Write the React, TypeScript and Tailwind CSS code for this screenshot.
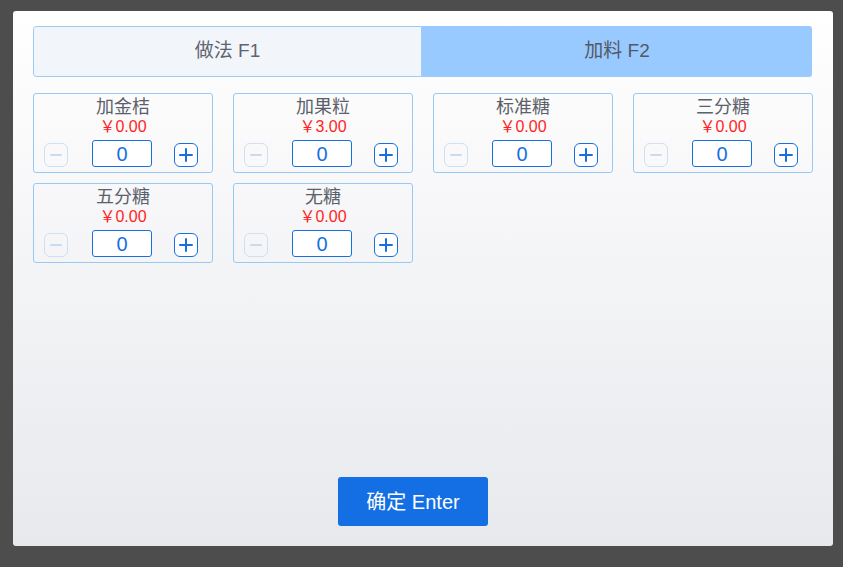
import React from "react";

const items = [
  { name: "加金桔", price: "0.00" },
  { name: "加果粒", price: "3.00" },
  { name: "标准糖", price: "0.00" },
  { name: "三分糖", price: "0.00" },
  { name: "五分糖", price: "0.00" },
  { name: "无糖", price: "0.00" },
];

function Card({ name, price }: { name: string; price: string }) {
  return (
    <div className="h-[80px] rounded-[3px] border border-[#97c9f7] flex flex-col items-center">
      <div className="text-[18px] leading-[22px] text-[#5c606a] mt-[2px]">{name}</div>
      <div className="text-[16px] leading-[18px] text-[#ff1f1f]">￥{price}</div>
      <div className="w-full flex items-end pl-[10px] mt-[4px]">
        <button className="w-[24px] h-[24px] rounded-[6px] border border-[#cfe0f6] flex items-center justify-center">
          <svg width="14" height="14" viewBox="0 0 14 14">
            <path d="M2 7h10" stroke="#c9dbf3" strokeWidth="2" strokeLinecap="round" />
          </svg>
        </button>
        <div className="ml-[24px] w-[60px] h-[27px] rounded-[3px] border border-[#1670e0] bg-white flex items-center justify-center text-[20px] text-[#1670e0] leading-none">
          0
        </div>
        <button className="ml-[22px] w-[24px] h-[24px] rounded-[6px] border border-[#1670e0] bg-white flex items-center justify-center">
          <svg width="16" height="16" viewBox="0 0 16 16">
            <path d="M2 8h12M8 2v12" stroke="#1670e0" strokeWidth="2" strokeLinecap="round" />
          </svg>
        </button>
      </div>
    </div>
  );
}

export default function App() {
  return (
    <div
      className="w-[843px] h-[567px] bg-[#4d4d4d] pt-[11px] pl-[13px]"
      style={{ fontFamily: '"Liberation Sans", "Noto Sans CJK SC", sans-serif' }}
    >
      <div className="w-[820px] h-[535px] rounded-[3px] bg-gradient-to-b from-white to-[#e8e9ed] pl-[20px] pr-[21px] pt-[15px] pb-[20px] flex flex-col">
        <div className="h-[51px] flex rounded-[3px] overflow-hidden">
          <div className="w-[389px] border border-[#9ccbf8] rounded-l-[3px] bg-[#f2f6fb] flex items-center justify-center text-[19px] text-[#606470]">
            做法 F1
          </div>
          <div className="flex-1 bg-[#99caff] flex items-center justify-center text-[19px] text-[#535866]">
            加料 F2
          </div>
        </div>
        <div className="grid grid-cols-[repeat(4,180px)] gap-x-[20px] gap-y-[10px] mt-[16px]">
          {items.map((it) => (
            <Card key={it.name} name={it.name} price={it.price} />
          ))}
        </div>
        <div className="flex-1" />
        <div className="flex justify-center">
          <button className="mr-[19px] w-[150px] h-[49px] rounded-[3px] bg-[#136fe3] text-white text-[20px]">
            确定 Enter
          </button>
        </div>
      </div>
    </div>
  );
}
